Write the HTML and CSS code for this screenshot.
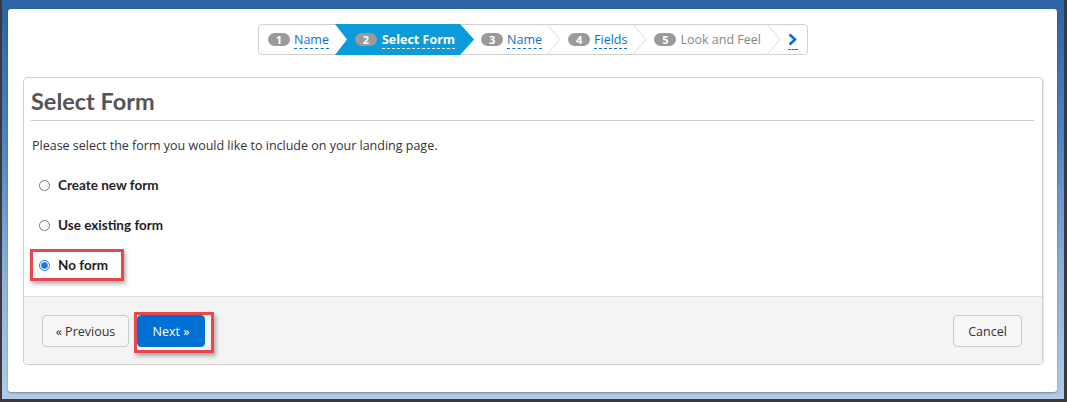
FILE: index.html
```html
<!DOCTYPE html>
<html lang="en">
<head>
<meta charset="utf-8">
<title>Select Form</title>
<link rel="stylesheet" href="styles.css">
</head>
<body>
<div class="frame">
  <div class="card">
    <div class="stepper-wrap">
      <nav class="stepper">
        <div class="step step-first">
          <span class="badge">1</span><a class="step-link" href="#">Name</a>
        </div>
        <div class="step step-active">
          <span class="badge">2</span><a class="step-link" href="#">Select Form</a>
        </div>
        <div class="step step-after-active">
          <span class="badge">3</span><a class="step-link" href="#">Name</a>
        </div>
        <svg class="sep" width="14" height="29" viewBox="0 0 14 29"><polyline points="0.5,0 13,14.5 0.5,29" fill="none" stroke="#dcdcdc" stroke-width="1"/></svg>
        <div class="step">
          <span class="badge">4</span><a class="step-link" href="#">Fields</a>
        </div>
        <svg class="sep" width="14" height="29" viewBox="0 0 14 29"><polyline points="0.5,0 13,14.5 0.5,29" fill="none" stroke="#dcdcdc" stroke-width="1"/></svg>
        <div class="step">
          <span class="badge">5</span><span class="step-disabled">Look and Feel</span>
        </div>
        <svg class="sep" width="14" height="29" viewBox="0 0 14 29"><polyline points="0.5,0 13,14.5 0.5,29" fill="none" stroke="#dcdcdc" stroke-width="1"/></svg>
        <a class="step-next" href="#"><svg width="9" height="13" viewBox="0 0 9 13"><path d="M1.6 1.5 L7 6.5 L1.6 11.5" fill="none" stroke="#0a6fd0" stroke-width="2.6" stroke-linejoin="miter"/></svg></a>
      </nav>
    </div>

    <section class="panel">
      <div class="panel-body">
        <h2 class="panel-title">Select Form</h2>
        <p class="intro">Please select the form you would like to include on your landing page.</p>
        <div class="options">
          <label class="option"><input type="radio" name="form"><span>Create new form</span></label>
          <label class="option"><input type="radio" name="form"><span>Use existing form</span></label>
          <label class="option option-highlight"><input type="radio" name="form" checked><span>No form</span></label>
        </div>
      </div>
      <div class="panel-footer">
        <button class="btn btn-default btn-prev" type="button">« Previous</button>
        <span class="highlight-btn"><button class="btn btn-primary" type="button">Next »</button></span>
        <button class="btn btn-default btn-cancel" type="button">Cancel</button>
      </div>
    </section>
  </div>
</div>
</body>
</html>
```

FILE: styles.css
```css
* { box-sizing: border-box; }

html, body {
  margin: 0;
  padding: 0;
}

body {
  font-family: "Open Sans", "Liberation Sans", sans-serif;
  font-size: 13px;
  color: #333;
}

.frame {
  width: 1067px;
  height: 402px;
  border-style: solid;
  border-color: #3a3a3a;
  border-width: 0 3px 3px 2px;
  padding: 9px 7px 6px 6px;
  background: linear-gradient(to bottom, #2b63a5 0%, #4f84c2 35%, #8fb1dc 70%, #b3cae7 100%);
}

.card {
  background: #fff;
  border-radius: 3px;
  box-shadow: 0 1px 2px rgba(0, 0, 0, 0.35);
  padding: 15px 14px 27px 15px;
}

.stepper-wrap {
  display: flex;
  justify-content: center;
}

.stepper {
  display: flex;
  align-items: center;
  height: 31px;
  border: 1px solid #d0d0d0;
  border-radius: 4px;
  background: #fff;
  padding-right: 9px;
  font-size: 12.5px;
}

.step {
  display: flex;
  align-items: center;
  height: 29px;
  white-space: nowrap;
  padding-right: 6px;
}

.step-first { padding-left: 9px; padding-right: 6px; }
.step-after-active { padding-left: 7px; padding-right: 5px; }
.sep { display: block; flex: none; margin-right: 7px; }

.step-active {
  height: 31px;
  margin: -1px 0;
  padding-left: 20px;
  padding-right: 19px;
  background: #0b9bd8;
  clip-path: polygon(0 0, calc(100% - 14px) 0, 100% 50%, calc(100% - 14px) 100%, 0 100%, 12px 50%);
}

.badge {
  display: inline-block;
  width: 22px;
  height: 13px;
  margin-right: 4px;
  border-radius: 7px;
  background: #9a9a9a;
  color: #fff;
  font-size: 11px;
  font-weight: 700;
  line-height: 13px;
  text-align: center;
}

.step-link {
  color: #0a6fd0;
  text-decoration: none;
  line-height: 16px;
  border-bottom: 1px dashed #0a6fd0;
  margin-top: 1px;
}

.step-active .step-link {
  color: #fff;
  font-weight: 700;
  border-bottom-color: #fff;
}

.step-active .badge { margin-right: 5px; }

.step-disabled {
  color: #888;
  line-height: 16px;
}

.step-next {
  display: flex;
  align-items: center;
  justify-content: center;
  width: 10px;
  height: 17px;
  margin-top: 3px;
  border-bottom: 1px dashed #0a6fd0;
}

.step-next svg { display: block; margin-top: -3px; }

.panel {
  margin-top: 22px;
  border: 1px solid #cfcfcf;
  border-radius: 4px;
  box-shadow: 1px 0 1px rgba(0, 0, 0, 0.08);
  overflow: hidden;
}

.panel-body {
  padding: 9px 8px 15px 8px;
}

.panel-title {
  margin: 0 0 0 -1px;
  padding-bottom: 4px;
  border-bottom: 1px solid #cccccc;
  font-family: Lato, "Open Sans", sans-serif;
  font-size: 23.5px;
  font-weight: 700;
  line-height: 29px;
  color: #555;
}

.intro {
  margin: 16px 0 0 0;
  font-size: 12.5px;
  line-height: 18px;
  color: #333;
}

.options {
  display: flex;
  flex-direction: column;
  align-items: flex-start;
  gap: 8px;
  margin-top: 14px;
  margin-left: -2px;
}

.option {
  display: inline-flex;
  align-items: center;
  height: 32px;
  padding: 0 13px 0 6px;
  border: 3px solid transparent;
  font-family: Lato, "Open Sans", sans-serif;
  font-size: 13.5px;
  font-weight: 700;
  color: #1e1e1e;
  cursor: pointer;
}

.option input {
  margin: 0 8px 0 0;
  width: 11px;
  height: 11px;
  accent-color: #1a73e8;
}

.option-highlight {
  border-color: #e8474d;
  box-shadow: 2px 3px 4px rgba(0, 0, 0, 0.3);
}

.panel-footer {
  display: flex;
  align-items: flex-start;
  padding: 15px 20px 11px 18px;
  border-top: 1px solid #dddddd;
  background: #f4f4f4;
}

.btn {
  height: 32px;
  padding: 0;
  border-radius: 4px;
  font-family: "Open Sans", "Liberation Sans", sans-serif;
  font-size: 12.5px;
  white-space: nowrap;
  cursor: pointer;
}

.btn-default {
  margin-top: 3px;
  border: 1px solid #c9c9c9;
  background: #f6f6f6;
  color: #333;
}

.btn-prev { width: 87px; }
.btn-cancel { width: 69px; margin-left: auto; }

.highlight-btn {
  display: block;
  margin-left: 5px;
  padding: 0 6px 3px 0;
  border: 3px solid #e8474d;
  box-shadow: 2px 3px 4px rgba(0, 0, 0, 0.3);
}

.btn-primary {
  display: block;
  width: 68px;
  border: 1px solid #0070d2;
  background: #0070d2;
  color: #fff;
}
```
